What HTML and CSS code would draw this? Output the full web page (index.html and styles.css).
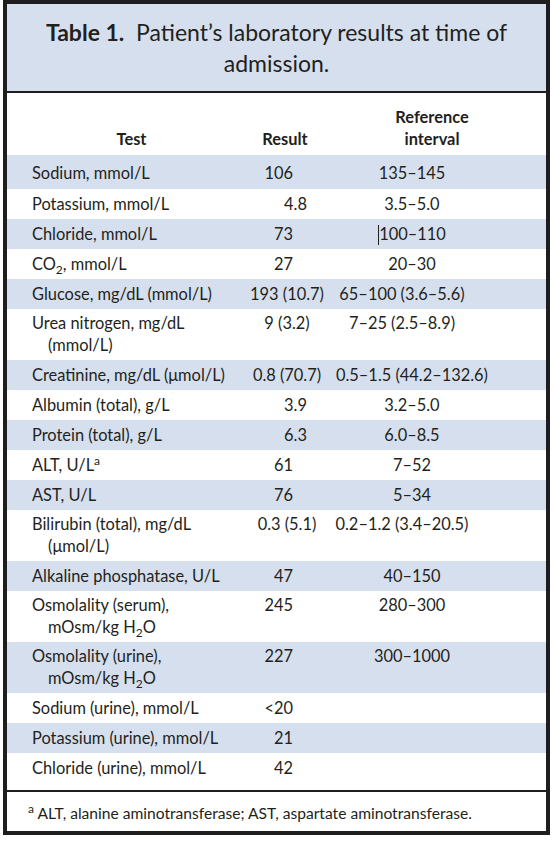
FILE: index.html
```html
<!DOCTYPE html>
<html lang="en">
<head>
  <meta charset="UTF-8">
  <title>Table 1. Patient's laboratory results</title>
  <link rel="stylesheet" href="styles.css">
</head>
<body>
  <div class="card">
    <div class="title">
      <b>Table 1.</b>&nbsp; Patient’s laboratory results at time of admission.
    </div>

    <table class="labs">
      <colgroup>
        <col class="c-test">
        <col class="c-result">
        <col class="c-ref">
      </colgroup>
      <thead>
        <tr>
          <th class="h-test">Test</th>
          <th class="h-result">Result</th>
          <th class="h-ref">Reference<br>interval</th>
        </tr>
      </thead>
      <tbody>
        <tr class="alt first"><td class="test">Sodium, mmol/L</td><td class="res">106</td><td class="ref">135–145</td></tr>
        <tr><td class="test">Potassium, mmol/L</td><td class="res dec">4.8</td><td class="ref">3.5–5.0</td></tr>
        <tr class="alt"><td class="test">Chloride, mmol/L</td><td class="res">73</td><td class="ref"><span class="caret"></span>100–110</td></tr>
        <tr><td class="test">CO<sub>2</sub>, mmol/L</td><td class="res">27</td><td class="ref">20–30</td></tr>
        <tr class="alt"><td class="test">Glucose, mg/dL (mmol/L)</td><td class="res mid">193 (10.7)</td><td class="ref shift">65–100 (3.6–5.6)</td></tr>
        <tr class="two"><td class="test">Urea nitrogen, mg/dL<br>(mmol/L)</td><td class="res mid">9 (3.2)</td><td class="ref shift">7–25 (2.5–8.9)</td></tr>
        <tr class="alt"><td class="test">Creatinine, mg/dL (μmol/L)</td><td class="res mid">0.8 (70.7)</td><td class="ref">0.5–1.5 (44.2–132.6)</td></tr>
        <tr><td class="test">Albumin (total), g/L</td><td class="res dec">3.9</td><td class="ref">3.2–5.0</td></tr>
        <tr class="alt"><td class="test">Protein (total), g/L</td><td class="res dec">6.3</td><td class="ref">6.0–8.5</td></tr>
        <tr><td class="test">ALT, U/L<sup>a</sup></td><td class="res">61</td><td class="ref">7–52</td></tr>
        <tr class="alt"><td class="test">AST, U/L</td><td class="res">76</td><td class="ref">5–34</td></tr>
        <tr class="two"><td class="test">Bilirubin (total), mg/dL<br>(μmol/L)</td><td class="res mid">0.3 (5.1)</td><td class="ref shift">0.2–1.2 (3.4–20.5)</td></tr>
        <tr class="alt"><td class="test">Alkaline phosphatase, U/L</td><td class="res">47</td><td class="ref">40–150</td></tr>
        <tr class="two"><td class="test">Osmolality (serum),<br>mOsm/kg H<sub>2</sub>O</td><td class="res">245</td><td class="ref">280–300</td></tr>
        <tr class="alt two"><td class="test">Osmolality (urine),<br>mOsm/kg H<sub>2</sub>O</td><td class="res">227</td><td class="ref">300–1000</td></tr>
        <tr><td class="test">Sodium (urine), mmol/L</td><td class="res">&lt;20</td><td class="ref"></td></tr>
        <tr class="alt"><td class="test">Potassium (urine), mmol/L</td><td class="res">21</td><td class="ref"></td></tr>
        <tr class="last"><td class="test">Chloride (urine), mmol/L</td><td class="res">42</td><td class="ref"></td></tr>
      </tbody>
    </table>

    <div class="note"><sup>a</sup> ALT, alanine aminotransferase; AST, aspartate aminotransferase.</div>
  </div>
</body>
</html>
```

FILE: styles.css
```css
body {
  margin: 0;
  background: #fff;
  font-family: Lato, "Liberation Sans", Arial, sans-serif;
  color: #231f20;
}
.card {
  width: 539px;
  margin-left: 3px;
  border: 4px solid #1f1d1e;
  background: #fff;
}
.title {
  height: 89px;
  box-sizing: border-box;
  padding: 13px 30px 0;
  background: #d6dfee;
  border-bottom: 2px solid #1f1d1e;
  text-align: center;
  font-size: 23px;
  line-height: 31px;
}
.labs {
  width: 100%;
  border-collapse: collapse;
  font-size: 16.4px;
  line-height: 22px;
}
.c-test { width: 233px; }
.c-result { width: 90px; }
.c-ref { width: 216px; }
th {
  font-weight: bold;
  vertical-align: bottom;
  padding: 13px 0 5px;
}
.h-test { padding-left: 16px; }
.h-ref { padding-right: 12px; }
td {
  padding: 4px 0;
  vertical-align: top;
}
tr.two td { padding-top: 3px; padding-bottom: 4px; }
tr.alt td { background: #d6dfee; }
tr.first td { padding-top: 7px; padding-bottom: 5px; }
tr.last td { padding-bottom: 11px; }
.test {
  padding-left: 41px;
  text-indent: -16px;
}
.res {
  text-align: right;
  padding-right: 37px;
}
.res.dec { padding-right: 23px; }
.res.mid {
  text-align: center;
  padding-right: 0;
  padding-left: 4px;
}
.ref {
  text-align: center;
  padding-right: 52px;
}
.ref.shift { padding-right: 72px; }
.caret {
  display: inline-block;
  width: 0;
  height: 20px;
  border-left: 1px solid #231f20;
  vertical-align: -5px;
}
sub, sup { font-size: 12px; line-height: 0; }
.note {
  border-top: 2px solid #1f1d1e;
  padding: 11px 0 8px 21px;
  font-size: 15.6px;
  line-height: 20px;
}
```
